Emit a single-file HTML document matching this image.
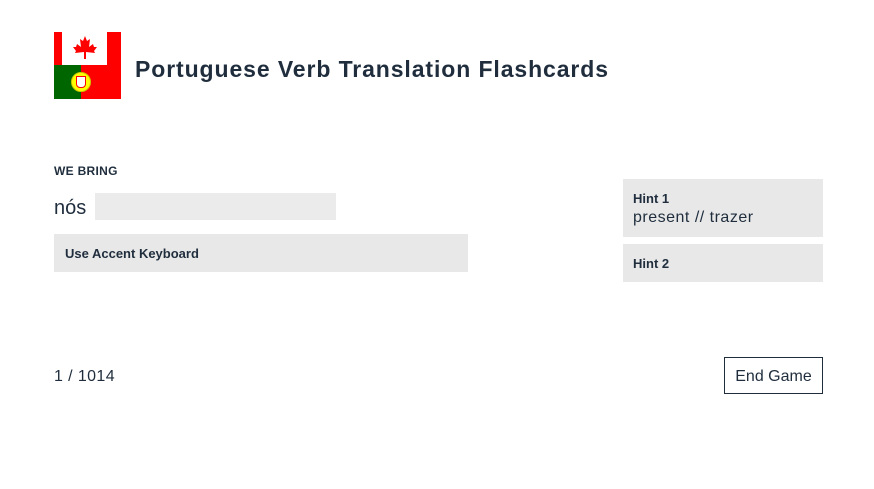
<!DOCTYPE html>
<html><head><style>
body{margin:0;width:874px;height:489px;background:#fff;font-family:"Liberation Sans",sans-serif;color:#1f2d3d;position:relative;overflow:hidden}
.a{position:absolute}
</style></head><body>
<div class="a" style="left:54px;top:32px;width:67px;height:67px;overflow:hidden">
 <div class="a" style="left:0;top:0;width:67px;height:33px;background:#f00"></div>
 <div class="a" style="left:8px;top:0;width:45px;height:33px;background:#fff"></div>
 <svg class="a" style="left:19px;top:3px" width="24" height="26" viewBox="0 0 24 26"><path d="M12 1 L14 6 L17 4 L16 12 L20 9 L21 12 L24 12 L21 16 L22 18 L13 17 L13 24 L11 24 L11 17 L2 18 L3 16 L0 12 L3 12 L4 9 L8 12 L7 4 L10 6 Z" fill="#f00"/></svg>
 <div class="a" style="left:0;top:33px;width:27px;height:34px;background:#060"></div>
 <div class="a" style="left:27px;top:33px;width:40px;height:34px;background:#f00"></div>
 <div class="a" style="left:17px;top:40px;width:18px;height:18px;border-radius:50%;background:#ff0;border:1px solid #cc0"></div>
 <div class="a" style="left:22px;top:44px;width:8px;height:10px;background:#fff;border:1px solid #f00;border-radius:0 0 4px 4px"></div>
</div>
<div class="a" style="left:135px;top:56px;font-size:23px;font-weight:bold;letter-spacing:0.9px">Portuguese Verb Translation Flashcards</div>
<div class="a" style="left:54px;top:164px;font-size:12px;font-weight:bold;letter-spacing:0.3px">WE BRING</div>
<div class="a" style="left:54px;top:197px;font-size:20px">nós</div>
<div class="a" style="left:95px;top:193px;width:241px;height:27px;background:#ebebeb"></div>
<div class="a" style="left:54px;top:234px;width:414px;height:38px;background:#e8e8e8"></div>
<div class="a" style="left:65px;top:246px;font-size:13px;font-weight:bold">Use Accent Keyboard</div>
<div class="a" style="left:623px;top:179px;width:200px;height:58px;background:#e8e8e8"></div>
<div class="a" style="left:633px;top:191px;font-size:13px;font-weight:bold">Hint 1</div>
<div class="a" style="left:633px;top:209px;font-size:16px;letter-spacing:0.5px">present // trazer</div>
<div class="a" style="left:623px;top:244px;width:200px;height:38px;background:#e8e8e8"></div>
<div class="a" style="left:633px;top:256px;font-size:13px;font-weight:bold">Hint 2</div>
<div class="a" style="left:54px;top:368px;font-size:16px;letter-spacing:0.4px">1 / 1014</div>
<div class="a" style="left:724px;top:357px;width:97px;height:35px;border:1px solid #1f2d3d;font-size:16px;line-height:37px;text-align:center">End Game</div>
</body></html>
